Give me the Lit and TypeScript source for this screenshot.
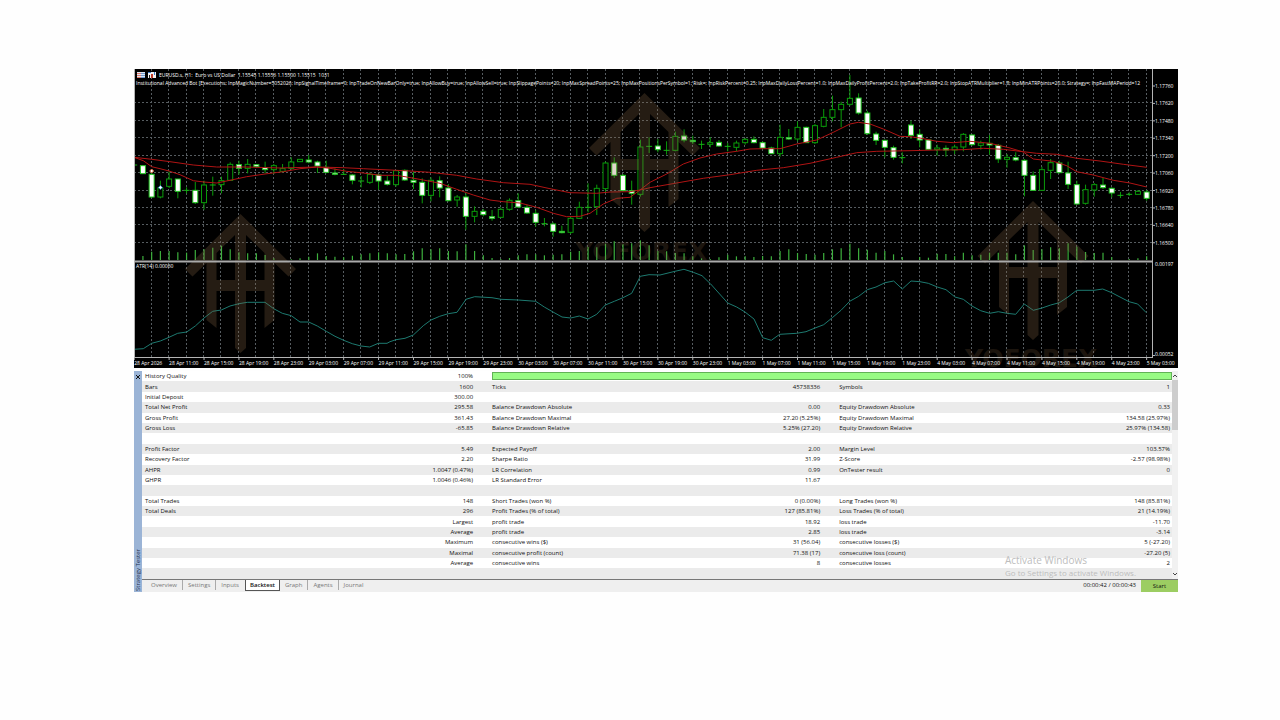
import { LitElement, html, svg, css, nothing } from "lit";
import { customElement, state } from "lit/decorators.js";
import { classMap } from "lit/directives/class-map.js";

/* Bars: kind (w = bear, h = bull, d = doji), body top, body bottom, wick top, wick bottom, in thirds of a pixel */
const BARS = `d 303 303 300 306;w 305 329 305 329;w 331 399 315 402;h 372 399 350 403;h 345 367 322 372;w 345 382 345 403;d 379 379 370 388;w 379 416 354 420;h 363 416 350 437;d 363 363 338 395;h 350 362 338 388;h 301 349 295 350;w 302 313 290 332;h 301 313 285 328;w 302 308 300 312;w 311 317 293 328;h 305 317 300 330;h 314 322 300 325;h 294 313 280 317;h 286 293 286 293;w 288 294 273 298;w 294 306 290 327;w 310 325 290 328;w 327 331 313 334;d 331 331 315 333;w 333 349 330 361;d 351 351 336 370;h 331 355 325 360;w 333 351 330 377;w 351 361 336 365;h 320 362 318 368;w 319 348 316 351;w 349 355 322 375;w 355 394 343 418;h 349 394 340 412;w 350 372 337 400;w 372 410 360 412;h 399 408 393 428;w 399 457 388 497;h 442 457 427 475;w 442 452 435 457;w 458 463 438 470;h 436 460 430 462;h 409 436 403 440;w 410 429 388 432;w 430 447 422 450;w 448 475 438 488;d 479 479 462 487;w 480 502 475 518;w 502 506 485 508;h 463 505 458 510;h 430 463 413 465;d 430 430 358 445;h 373 428 362 453;h 297 374 293 385;w 297 334 280 342;w 334 380 330 383;w 380 388 350 422;h 249 391 227 398;d 247 247 220 267;w 246 257 225 265;d 259 259 232 272;h 217 259 203 262;w 216 228 196 235;w 229 233 215 240;d 241 241 230 255;h 236 241 220 250;w 235 246 228 248;d 247 247 237 262;h 237 250 230 262;h 226 236 222 242;w 226 236 217 238;w 236 252 232 256;w 252 269 248 270;h 220 269 182 278;w 221 225 195 228;h 190 225 172 232;w 190 236 188 237;h 185 236 180 240;h 160 187 135 190;h 137 160 95 172;h 121 137 113 190;h 103 121 33 125;w 102 147 88 152;w 147 209 140 213;w 210 229 203 243;w 229 250 227 280;w 251 280 245 287;d 281 281 265 298;w 183 214 170 225;w 211 228 196 250;w 228 256 225 258;h 252 257 242 275;w 253 258 244 278;h 249 258 242 270;h 211 249 207 262;w 213 242 211 245;h 237 244 230 257;w 238 243 213 272;w 244 285 240 297;h 280 286 270 311;w 281 288 265 292;w 289 334 285 397;w 334 379 322 381;h 317 379 308 381;h 296 319 285 345;w 297 326 290 328;w 327 361 293 375;w 362 420 350 423;h 377 418 362 422;h 362 378 357 398;w 363 371 342 375;w 373 387 370 400;d 394 394 384 402;d 391 391 385 396;h 382 391 378 392;w 384 403 378 410`
  .split(";")
  .map((row) => {
    const [kind, ...n] = row.split(" ");
    const [top, bottom, high, low] = n.map((v) => Number(v) / 3 + 64);
    return { kind, top, bottom, high, low };
  });

/* Tick volume, in thirds of a pixel */
const VOLUME = [
  0, 12, 25, 27, 27, 23, 22, 30, 32, 37, 43, 32, 23, 20, 20, 15, 5, 0, 2, 5, 10, 20, 12, 10, 8, 13, 17, 20, 23, 20,
  17, 18, 26, 35, 32, 35, 27, 26, 47, 27, 14, 6, 3, 6, 14, 17, 17, 14, 16, 17, 25, 27, 39, 38, 49, 56, 47, 50, 59,
  44, 27, 26, 21, 20, 11, 5, 3, 8, 16, 11, 11, 9, 12, 11, 27, 32, 21, 18, 16, 21, 32, 35, 49, 35, 31, 22, 27, 17, 9,
  0, 9, 7, 19, 18, 11, 22, 14, 16, 22, 22, 22, 17, 44, 30, 32, 38, 35, 50, 40, 24, 21, 22, 9, 0, 3, 5, 11,
];

type Part = { x: number; y: number; pts: string };
const join = (parts: Part[]) =>
  parts
    .flatMap((p) =>
      p.pts.split(" ").map((s) => {
        const [x, y] = s.split(",").map(Number);
        return `${(x / 3 + p.x).toFixed(1)},${(y / 3 + p.y).toFixed(1)}`;
      })
    )
    .join(" ");

const FAST_MA = join([
  { x: 130, y: 64, pts: "12,280 40,290 65,308 90,314 117,321 150,332 190,350 222,354 260,357 300,349 350,338 405,330 460,323 510,314 560,309 600,313 650,322 700,327 750,334" },
  { x: 390, y: 64, pts: "0,334 18,334 45,338 100,348 150,358 200,376 250,393 300,408 340,413 390,417 440,430 490,448 530,458 570,457 600,448 640,420 680,403 720,400 750,378" },
  { x: 650, y: 64, pts: "0,355 50,330 100,300 150,282 200,270 260,262 300,255 340,254 390,254 440,240 500,228 550,205 600,180 625,175 660,180 700,195 750,217" },
  { x: 910, y: 64, pts: "0,218 30,222 80,232 130,236 180,232 240,238 300,252 340,264 370,285 430,292 470,305 500,323 550,333 610,349 660,357 710,369" },
]);
const SLOW_MA = join([
  { x: 130, y: 64, pts: "12,280 65,286 120,293 190,303 260,309 350,309 450,312 560,309 640,311 700,314" },
  { x: 390, y: 64, pts: "0,318 60,321 120,325 200,334 260,345 340,356 420,361 480,374 540,386 620,388 660,384 720,383 750,378" },
  { x: 650, y: 64, pts: "0,371 80,357 160,343 240,332 320,319 400,311 480,298 560,280 620,266 680,262" },
  { x: 910, y: 64, pts: "0,260 80,258 160,257 220,253 280,256 340,263 380,268 440,271 500,283 570,291 640,301 710,310" },
]);
const ATR = join([
  { x: 130, y: 200, pts: "12,448 40,446 65,430 91,423 117,412 143,400 170,396 196,378 222,354 248,334 274,330 300,318 327,311 352,307 405,307 431,326 457,340 484,347 510,366 536,366 562,378 589,394 615,409 641,421 667,431 693,438 719,441 745,430 771,430" },
  { x: 390, y: 225, pts: "0,350 18,344 45,340 70,330 100,302 123,285 149,274 175,266 201,262 228,223 254,215 306,218 333,223 385,225 437,229 463,246 489,261 516,276 542,279 568,273 594,282 620,268 646,240 673,229 699,218 725,205 751,154 777,149 810,150 855,139 882,133 910,142 936,152 962,177 1013,234 1040,246 1065,261 1092,282 1118,338 1144,346 1169,328" },
  { x: 780, y: 225, pts: "0,328 50,325 78,320 105,309 131,299 157,278 183,256 209,229 236,214 262,194 288,186 315,173 341,168 367,192 393,168 420,170 445,175 472,186 498,194 525,216 550,223 576,243 602,257 629,265 655,260 681,265 707,268 733,237 760,256 786,249 812,240 838,233 864,216 890,196 942,196 968,192 995,203 1047,230 1073,237 1099,263" },
]);

const PRICES = ["1.17760", "1.17620", "1.17480", "1.17340", "1.17200", "1.17060", "1.16920", "1.16780", "1.16640", "1.16500"];
const HOURS = ["03:00", "07:00", "11:00", "15:00", "19:00", "23:00"];
const TIMES = [
  "28 Apr 2026",
  ...HOURS.slice(2).map((h) => `28 Apr ${h}`),
  ...["29 Apr", "30 Apr", "1 May", "4 May"].flatMap((d) => HOURS.map((h) => `${d} ${h}`)),
  "5 May 03:00",
];
const barX = (i: number) => 134.2 + 8.728 * i;
const priceY = (i: number) => 86 + 17.42 * i;

const EA_INPUTS =
  "Institutional Advanced Bot [Executions; InpMagicNumber=5052026; InpSignalTimeframe=0; InpTradeOnNewBarOnly=true; InpAllowBuy=true; InpAllowSell=true; InpSlippagePoints=20; InpMaxSpreadPoints=25; InpMaxPositionsPerSymbol=1; Risk=; InpRiskPercent=0.25; InpMaxDailyLossPercent=1.0; InpMaxDailyProfitPercent=2.0; InpTakeProfitRR=2.0; InpStopATRMultiplier=1.8; InpMinATRPoints=20.0; Strategy=; InpFastMAPeriod=12";

@customElement("price-chart")
export class PriceChart extends LitElement {
  static styles = css`
    :host { display: block; background: #000; }
    .chart { display: block; width: 100%; height: auto; }
    .label { font-family: "Open Sans", "Noto Sans", sans-serif; font-size: 5px; font-weight: 500; fill: #fff; white-space: pre; }
    .grid { stroke: #565c60; stroke-width: 1; stroke-dasharray: 2 2; fill: none; }
    .frame { stroke: #b4b4b4; fill: none; }
    .split { stroke: #aaa; stroke-width: 2; }
    .wick { stroke: #0a9c0a; }
    .bull { stroke: #0a9c0a; fill: #000; }
    .bear { stroke: #22c522; fill: #fff; }
    .doji { stroke: #15b415; }
    .volume { stroke: #3db03d; stroke-width: 1.2; }
    .ma { stroke: #b01414; fill: none; }
    .atr { stroke: #1d7a70; fill: none; }
    .mark { fill: #8a6848; opacity: 0.27; }
    .brand { font: bold 25px "DejaVu Sans", sans-serif; fill: #8a6848; opacity: 0.2; }
  `;

  private mark(x: number, y: number) {
    return svg`<path class="mark" fill-rule="evenodd" transform="translate(${x} ${y})"
      d="M0 0L55.500 55L48 62.500L34 49V106L24 114V77H5.500V134L0 139L-5.500 134V77H-24V114L-34 106V49L-48 62.500L-55.500 55ZM-5.500 21L-24 39V66H-5.500ZM5.500 21V66H24V39Z"/>`;
  }

  private bar(b: (typeof BARS)[number], i: number) {
    const x = barX(i);
    return svg`
      <line class="wick" x1=${x} x2=${x} y1=${b.high} y2=${b.low} />
      ${b.kind === "d"
        ? svg`<line class="doji" x1=${x - 3} x2=${x + 3} y1=${b.top} y2=${b.top} />`
        : svg`<rect class=${b.kind === "w" ? "bear" : "bull"} x=${x - 2.5} y=${b.top} width="5" height=${b.bottom - b.top} />`}`;
  }

  render() {
    const columns = BARS.map((_, i) => i).filter((i) => i % 2 === 0 && i > 0);
    return html`
      <svg class="chart" viewBox="134 69 1044 299" role="img" aria-label="EURUSD H1 price chart with ATR">
        <clipPath id="plot"><rect x="134" y="69" width="1018" height="289" /></clipPath>
        <g class="grid">
          ${columns.map((i) => svg`<path d="M${Math.round(barX(i)) - 0.5} 69V260M${Math.round(barX(i)) - 0.5} 263V357" />`)}
          ${PRICES.slice(1).map((_, i) => svg`<path d="M134 ${Math.round(priceY(i + 1)) - 0.5}H1152" />`)}
        </g>
        ${VOLUME.map((v, i) => (v ? svg`<line class="volume" x1=${barX(i)} x2=${barX(i)} y1=${260 - v / 3} y2="260" />` : nothing))}
        ${BARS.map((b, i) => this.bar(b, i))}
        <polyline class="ma" points=${SLOW_MA} />
        <polyline class="ma" points=${FAST_MA} />
        <polyline class="atr" points=${ATR} />
        <path d="M151.700 169l2 2-2 2-2-2z" fill="#fff" stroke="#d2603c" />
        <path d="M160.400 185.500l2 2-2 2-2-2z" fill="#fff" stroke="#2f86b8" />
        ${this.mark(240.5, 214)}${this.mark(644.5, 93)}${this.mark(1033, 201)}
        <text class="brand" x="575" y="260">YOFOREX</text>
        <text class="brand" x="965" y="367">YOFOREX</text>
        <line class="split" x1="134" x2="1152" y1="261.500" y2="261.500" />
        <path class="frame" d="M134.500 69V358M134 357.500H1152M1152.500 69V358" />
        ${PRICES.map((p, i) => svg`
          <path class="frame" d="M1152 ${priceY(i)}h3" />
          <text class="label" x="1155" y=${priceY(i) + 2}>${p}</text>`)}
        <path class="frame" d="M1152 355.500h3" />
        <text class="label" x="1155" y="266">0.00197</text>
        <text class="label" x="1155" y="356">0.00052</text>
        ${TIMES.map((t, i) => svg`
          <path class="frame" d="M${barX(i * 4)} 357v3" />
          <text class="label" x=${barX(i * 4)} y="365">${t}</text>`)}
        <rect x="137" y="72" width="8" height="6" fill="#dfe6f2" />
        <path d="M137 73.500h4M137 75.500h4M137 77.500h4" stroke="#e07a6a" />
        <path d="M141 73.500h4M141 75.500h4M141 77.500h4" stroke="#6a9ad0" />
        <path d="M148 72h8v6h-8z" fill="#f2f2f2" />
        <path d="M148 72.500h3M154.500 72v3" stroke="#3c7cc8" />
        <path d="M152 74v4" stroke="#c03c2c" stroke-width="2" />
        <path d="M149.500 75v3" stroke="#222" />
        <text class="label" x="159" y="77">EURUSD.s, H1:  Euro vs US Dollar  1.15545 1.15556 1.15500 1.15515  1031</text>
        <text class="label" x="136" y="85" clip-path="url(#plot)">${EA_INPUTS}</text>
        <text class="label" x="136" y="268">ATR(14) 0.00060</text>
      </svg>
    `;
  }
}

const STATS: string[][] = [
  ["Bars", "1600", "Ticks", "45738336", "Symbols", "1"],
  ["Initial Deposit", "300.00", "", "", "", ""],
  ["Total Net Profit", "295.58", "Balance Drawdown Absolute", "0.00", "Equity Drawdown Absolute", "0.33"],
  ["Gross Profit", "361.43", "Balance Drawdown Maximal", "27.20 (5.25%)", "Equity Drawdown Maximal", "134.58 (25.97%)"],
  ["Gross Loss", "-65.85", "Balance Drawdown Relative", "5.25% (27.20)", "Equity Drawdown Relative", "25.97% (134.58)"],
  ["", "", "", "", "", ""],
  ["Profit Factor", "5.49", "Expected Payoff", "2.00", "Margin Level", "103.57%"],
  ["Recovery Factor", "2.20", "Sharpe Ratio", "31.99", "Z-Score", "-2.57 (98.98%)"],
  ["AHPR", "1.0047 (0.47%)", "LR Correlation", "0.99", "OnTester result", "0"],
  ["GHPR", "1.0046 (0.46%)", "LR Standard Error", "11.67", "", ""],
  ["", "", "", "", "", ""],
  ["Total Trades", "148", "Short Trades (won %)", "0 (0.00%)", "Long Trades (won %)", "148 (85.81%)"],
  ["Total Deals", "296", "Profit Trades (% of total)", "127 (85.81%)", "Loss Trades (% of total)", "21 (14.19%)"],
  ["", "Largest", "profit trade", "18.92", "loss trade", "-11.70"],
  ["", "Average", "profit trade", "2.85", "loss trade", "-3.14"],
  ["", "Maximum", "consecutive wins ($)", "31 (56.04)", "consecutive losses ($)", "5 (-27.20)"],
  ["", "Maximal", "consecutive profit (count)", "71.38 (17)", "consecutive loss (count)", "-27.20 (5)"],
  ["", "Average", "consecutive wins", "8", "consecutive losses", "2"],
  ["", "", "", "", "", ""],
];
const TABS = ["Overview", "Settings", "Inputs", "Backtest", "Graph", "Agents", "Journal"];

@customElement("strategy-tester")
export class StrategyTester extends LitElement {
  static styles = css`
    :host { display: grid; grid-template-columns: 8px 1fr; font: 6px/8px "Open Sans", "Noto Sans", sans-serif; color: #111; }
    button { font: inherit; color: inherit; border: 0; padding: 0; margin: 0; background: none; }
    .side { display: flex; flex-direction: column; justify-content: space-between; align-items: center; background: #9bb4d6; color: #1c2f4c; }
    .close { display: flex; padding-top: 3px; }
    .name { writing-mode: vertical-rl; transform: rotate(180deg); line-height: 8px; white-space: nowrap; padding-top: 1px; }
    .body { display: grid; grid-template-columns: 1fr 6px; position: relative; }
    .stats { width: 100%; height: 208px; border-collapse: collapse; table-layout: fixed; background: #fff; }
    .label-col { width: 17%; }
    .value-col { width: 16.7%; }
    .last-col { width: 15.6%; }
    tr { height: 10px; }
    tr:nth-child(even) { background: #ebebeb; }
    th, td { font-weight: 500; padding: 0; white-space: nowrap; line-height: 8px; }
    th { text-align: left; padding-left: 3px; }
    td { text-align: right; }
    .first { padding-right: 16px; }
    .second { padding-right: 16px; }
    .third { padding-right: 2px; }
    .quality { padding: 0 0 0 3px; }
    .meter { height: 6px; border: 1px solid #62b156; background: #98fb84; }
    .scroll { display: flex; flex-direction: column; background: #f1f1f1; }
    .arrow { display: flex; justify-content: center; padding: 3px 0; }
    .thumb { height: 50px; background: #cdcdcd; }
    .fill { flex: 1; }
    .notice { position: absolute; right: 42px; bottom: 1px; color: #bdbdbd; pointer-events: none; }
    .notice-title { font-size: 10px; line-height: 14px; }
    .notice-text { font-size: 8px; line-height: 11px; }
    .bar { display: flex; align-items: stretch; height: 12px; border-top: 1px solid #777; background: #efefef; }
    .tabs { display: flex; flex: 1; padding-left: 4px; }
    .tab { height: 10px; padding: 0 5px; color: #777; line-height: 8px; border-right: 1px solid #aaa; }
    .tab.before, .tab:last-child { border-right-color: transparent; }
    .tab.active { height: 11px; padding: 0 4px; color: #111; font-weight: 600; background: #fff; border: 1px solid #555; border-top: 0; }
    .time { line-height: 11px; padding-right: 5px; }
    .start { width: 37px; background: #9ccd62; }
  `;

  @state() private tab = "Backtest";

  render() {
    const active = TABS.indexOf(this.tab);
    return html`
      <div class="side">
        <button class="close" aria-label="Close">
          <svg width="6" height="6" viewBox="0 0 6 6"><path d="M1 1l4 4M5 1L1 5" stroke="#111" /></svg>
        </button>
        <span class="name">Strategy Tester</span>
      </div>
      <div class="panel">
        <div class="body">
          <table class="stats">
            <colgroup>
              <col class="label-col" /><col class="value-col" />
              <col class="label-col" /><col class="value-col" />
              <col class="label-col" /><col class="last-col" />
            </colgroup>
            <tbody>
              <tr>
                <th scope="row">History Quality</th>
                <td class="first">100%</td>
                <td class="quality" colspan="4"><div class="meter"></div></td>
              </tr>
              ${STATS.map(
                (r) => html`<tr>
                  <th scope="row">${r[0]}</th><td class="first">${r[1]}</td>
                  <th>${r[2]}</th><td class="second">${r[3]}</td>
                  <th>${r[4]}</th><td class="third">${r[5]}</td>
                </tr>`
              )}
            </tbody>
          </table>
          <div class="scroll">
            <button class="arrow" aria-label="Scroll up">
              <svg width="4" height="3" viewBox="0 0 4 3"><path d="M0 3l2-2 2 2" fill="none" stroke="#444" /></svg>
            </button>
            <div class="thumb"></div>
            <div class="fill"></div>
            <button class="arrow" aria-label="Scroll down">
              <svg width="4" height="3" viewBox="0 0 4 3"><path d="M0 0l2 2 2-2" fill="none" stroke="#444" /></svg>
            </button>
          </div>
          <div class="notice">
            <div class="notice-title">Activate Windows</div>
            <div class="notice-text">Go to Settings to activate Windows.</div>
          </div>
        </div>
        <div class="bar">
          <div class="tabs">
            ${TABS.map(
              (t, i) => html`<button
                class=${classMap({ tab: true, active: i === active, before: i === active - 1 })}
                @click=${() => (this.tab = t)}
              >${t}</button>`
            )}
          </div>
          <span class="time">00:00:42 / 00:00:43</span>
          <button class="start">Start</button>
        </div>
      </div>
    `;
  }
}

@customElement("app-root")
export class AppRoot extends LitElement {
  static styles = css`
    :host { display: flex; flex-direction: column; gap: 3px; box-sizing: border-box; min-height: 100vh; padding: 69px 102px 69px 134px; background: #fefefe; }
  `;
  render() {
    return html`<price-chart></price-chart><strategy-tester></strategy-tester>`;
  }
}
